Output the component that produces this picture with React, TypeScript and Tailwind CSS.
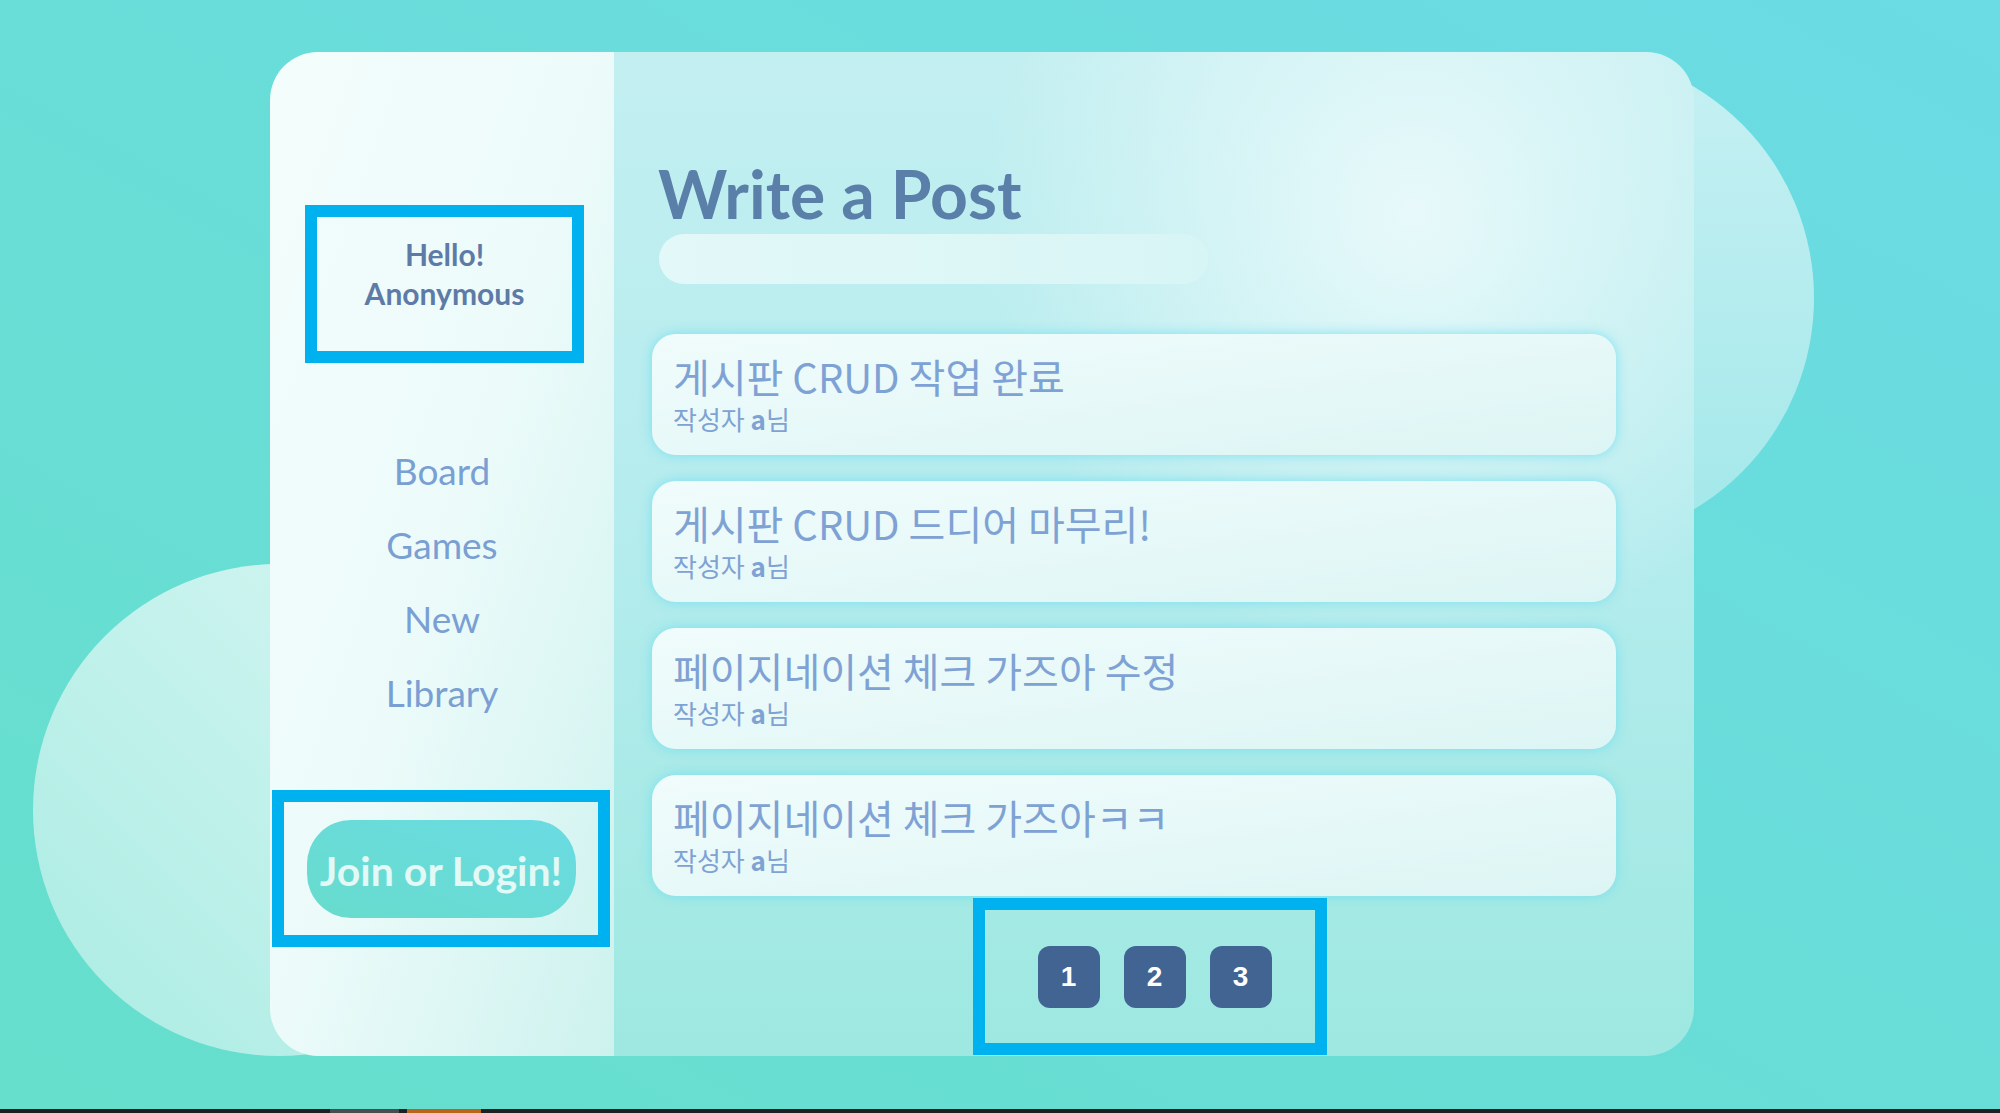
import React from "react";

const posts = [
  { title: "게시판 CRUD 작업 완료", author: "a" },
  { title: "게시판 CRUD 드디어 마무리!", author: "a" },
  { title: "페이지네이션 체크 가즈아 수정", author: "a" },
  { title: "페이지네이션 체크 가즈아ㅋㅋ", author: "a" },
];

const latin = { fontFamily: "Lato, 'Noto Sans', sans-serif" };
const korean = { fontFamily: "'Noto Sans CJK KR', 'Noto Sans', sans-serif" };

export default function App() {
  return (
    <div
      className="relative flex h-[1113px] w-full flex-col overflow-hidden bg-gradient-to-bl from-[#6bdbe4] to-[#66dfcc]"
      style={latin}
    >
      <div className="relative flex-1">
        {/* background blobs */}
        <div className="absolute left-[1322px] top-[52px] h-[492px] w-[492px] rounded-full bg-gradient-to-b from-[#c6f0f3] to-[#a2e8ea]" />
        <div className="absolute left-[33px] top-[564px] h-[492px] w-[492px] rounded-full bg-gradient-to-bl from-[#d8f6f3] to-[#a9ece3]" />

        {/* Card */}
        <div className="relative ml-[270px] mt-[52px] flex h-[1004px] w-[1424px] overflow-hidden rounded-[48px]">
          {/* Sidebar */}
          <aside className="flex w-[344px] flex-col bg-gradient-to-br from-[#f3fdfc] via-[#ecfbfa] to-[#cdf2ee]">
            <div className="ml-[35px] mt-[153px] flex h-[158px] w-[279px] flex-col items-center justify-center border-[12px] border-[#00b1f0] pb-[20px] text-center text-[30px] font-bold leading-[39px] text-[#5d7ba6]">
              <span>Hello!</span>
              <span>Anonymous</span>
            </div>

            <nav className="mt-[71px] flex flex-col items-center text-[37px] leading-[74px] text-[#7a9fd3]">
              <a>Board</a>
              <a>Games</a>
              <a>New</a>
              <a>Library</a>
            </nav>

            <div className="ml-[2px] mt-[60px] flex h-[157px] w-[338px] items-center justify-center border-[12px] border-[#00b1f0]">
              <button className="h-[98px] w-[269px] rounded-[44px] bg-gradient-to-tr from-[#67dccc] to-[#6adbe3] pt-[4px] text-[41px] font-bold text-[#e2f9f6]">
                Join or Login!
              </button>
            </div>
          </aside>

          {/* Main */}
          <main className="flex flex-1 flex-col bg-[radial-gradient(ellipse_at_74%_16%,rgba(236,250,251,0.9),rgba(236,250,251,0)_38%),linear-gradient(to_bottom,#c3eff1,#b6ecee_45%,#9ee8e1)] pl-[38px]">
            <h1 className="ml-[6px] mt-[102px] text-[66px] font-bold leading-[80px] text-[#5a7fa8]">
              Write a Post
            </h1>
            <div className="ml-[7px] h-[50px] w-[549px] rounded-full bg-gradient-to-r from-[#e3f8f8] to-[#d8f5f5]" />

            <div className="mt-[50px] flex w-[964px] flex-col gap-[26px]">
              {posts.map((p, i) => (
                <div
                  key={i}
                  className="h-[121px] rounded-[24px] bg-gradient-to-br from-[#f1fcfc] to-[#dcf5f4] px-[21px] pt-[20px] shadow-[0_0_12px_rgba(110,222,240,0.85)]"
                  style={korean}
                >
                  <div className="text-[40px] leading-[44px] text-[#7fa2d4]">{p.title}</div>
                  <div className="mt-[6px] text-[26px] leading-[30px] text-[#7fa2d4]">
                    작성자 <b className="font-bold">{p.author}</b>님
                  </div>
                </div>
              ))}
            </div>

            <div className="ml-[321px] mt-[2px] flex h-[157px] w-[354px] items-center justify-center gap-[24px] border-[12px] border-[#00b1f0] pl-[9px]">
              {[1, 2, 3].map((n) => (
                <button
                  key={n}
                  className="flex h-[62px] w-[62px] items-center justify-center rounded-[12px] bg-[#426493] text-[28px] font-bold text-white"
                  style={{ fontFamily: "'Liberation Sans', Arial, sans-serif" }}
                >
                  {n}
                </button>
              ))}
            </div>
          </main>
        </div>
      </div>

      {/* taskbar edge */}
      <div className="flex h-[4px] w-full bg-[#1c2020]">
        <div className="ml-[330px] w-[69px] bg-[#4a4d4e]" />
        <div className="ml-[8px] w-[74px] bg-[#b8651c]" />
      </div>
    </div>
  );
}
